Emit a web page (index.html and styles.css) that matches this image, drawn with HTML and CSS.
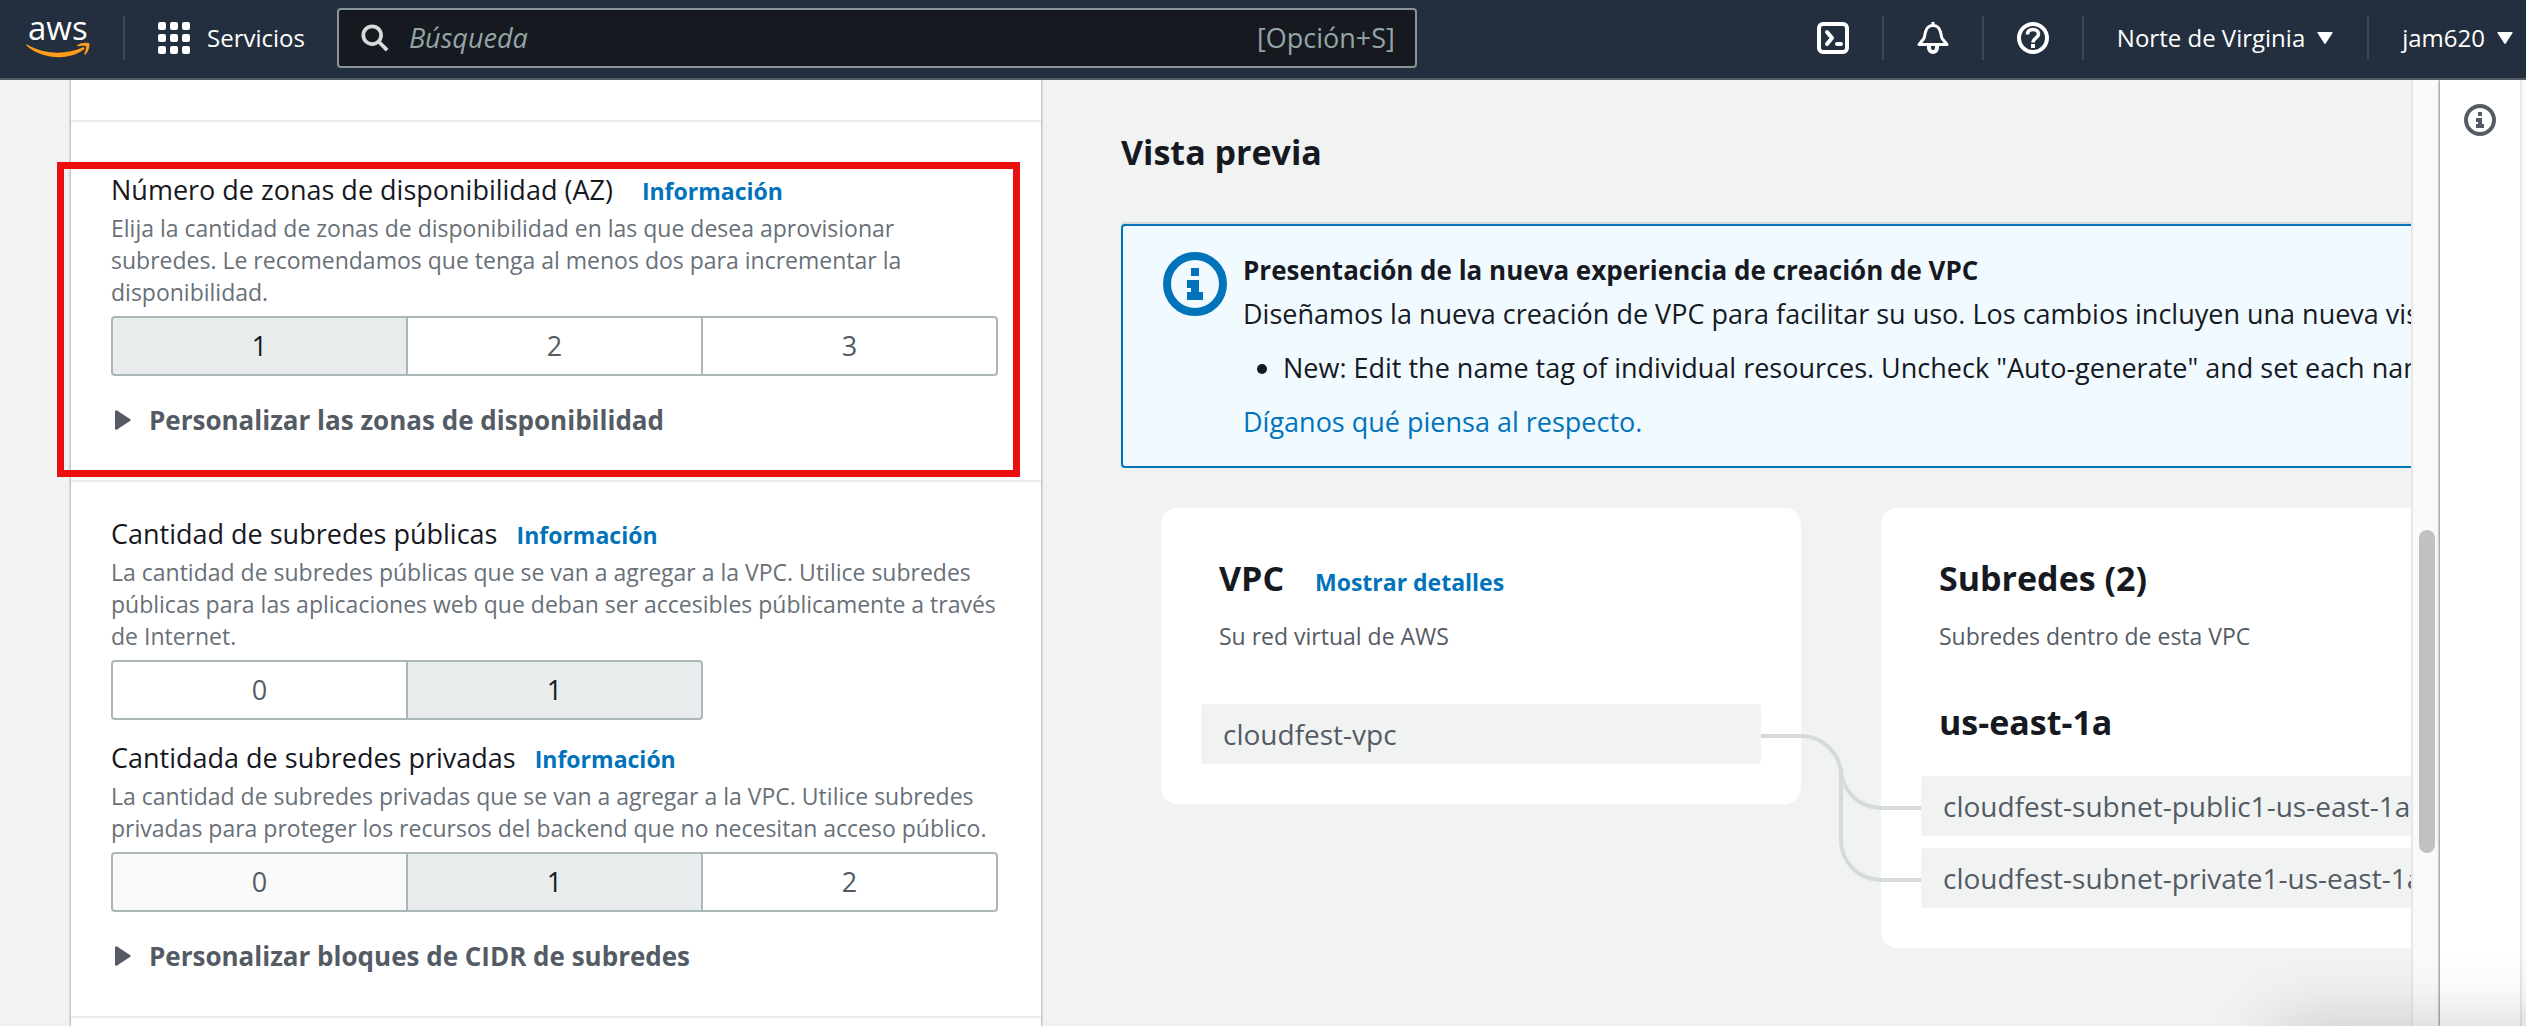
FILE: index.html
```html
<!DOCTYPE html>
<html lang="es">
<head>
<meta charset="utf-8">
<title>Crear VPC</title>
<link rel="stylesheet" href="styles.css">
</head>
<body>
<header class="topbar">
  <a class="logo" href="#" aria-label="AWS">
    <svg width="64" height="44" viewBox="0 0 64 44">
      <text class="logo-text" x="2" y="24">aws</text>
      <path fill="#ff9d1b" d="M1 28.500C18 38.500 40 39 56.500 31.500c1.800-.8 3 .8 1.400 2C43 45 16 43.500.6 29.700c-.8-.8-.2-1.500.4-1.200z"/>
      <path fill="#ff9d1b" d="M51 29.500c3-2.600 8.500-3 11.500-2.400 1.200.3 1.100 1.500.9 3-.4 3-1.500 6.200-3.800 8.300-.7.6-1.500.3-1.200-.6.9-2.500 2.200-6.100 1.600-7.300-.8-1-5.300-.6-8-.2-.9.100-1.600-.3-1-.8z"/>
    </svg>
  </a>
  <span class="rule"></span>
  <button class="services" type="button">
    <svg width="34" height="32" viewBox="0 0 34 32" fill="#fff">
      <rect x="1" width="8" height="8" rx="2"/><rect x="13" width="8" height="8" rx="2"/><rect x="25" width="8" height="8" rx="2"/>
      <rect x="1" y="12" width="8" height="8" rx="2"/><rect x="13" y="12" width="8" height="8" rx="2"/><rect x="25" y="12" width="8" height="8" rx="2"/>
      <rect x="1" y="24" width="8" height="8" rx="2"/><rect x="13" y="24" width="8" height="8" rx="2"/><rect x="25" y="24" width="8" height="8" rx="2"/>
    </svg>
    Servicios
  </button>
  <form class="search" role="search">
    <svg width="28" height="28" viewBox="0 0 30 30" fill="none" stroke="#d5dbdb" stroke-width="4">
      <circle cx="12" cy="12" r="9.500"/><path d="M18.500 18.500L28 28"/>
    </svg>
    <input type="search" placeholder="Búsqueda" aria-label="Búsqueda">
    <span class="shortcut">[Opción+S]</span>
  </form>
  <nav class="tools">
    <button class="tool" type="button" aria-label="CloudShell">
      <svg width="32" height="32" viewBox="0 0 32 32" fill="none" stroke="#fff" stroke-width="4" stroke-linejoin="round">
        <rect x="2" y="2" width="28" height="28" rx="4"/><path stroke-linecap="round" d="M10 10l5 6-5 6M20 22h4"/>
      </svg>
    </button>
    <span class="rule"></span>
    <button class="tool" type="button" aria-label="Notificaciones">
      <svg width="32" height="32" viewBox="0 0 32 32" fill="none" stroke="#fff" stroke-linejoin="round">
        <path stroke-width="3" d="M16 0v4M2 22.500h28l-4.500-5.500c-1.500-2-1-4-2-7C22.500 6 19.500 3.500 16 3.500S9.500 6 8.500 10c-1 3-.5 5-2 7z"/>
        <path stroke-width="4" d="M12 23v3a4 4 0 0 0 8 0v-3"/>
      </svg>
    </button>
    <span class="rule"></span>
    <button class="tool" type="button" aria-label="Ayuda">
      <svg width="32" height="32" viewBox="0 0 32 32" fill="none" stroke="#fff">
        <circle cx="16" cy="16" r="14" stroke-width="4"/>
        <path stroke-width="3.500" d="M10.500 12.500c0-3 2-5 5.500-5s5.500 2 5.500 4.800c0 3.200-5.500 4-5.500 8.200"/>
        <path fill="#fff" stroke="none" d="M14 22h4v4h-4z"/>
      </svg>
    </button>
    <span class="rule"></span>
    <button class="menu" type="button">Norte de Virginia
      <svg width="16" height="12" viewBox="0 0 16 12" fill="#fff"><path d="M1 0h14q1 0 .5 1L9 11q-1 2-2 0L.5 1Q0 0 1 0z"/></svg>
    </button>
    <span class="rule"></span>
    <button class="menu account" type="button">jam620
      <svg width="16" height="12" viewBox="0 0 16 12" fill="#fff"><path d="M1 0h14q1 0 .5 1L9 11q-1 2-2 0L.5 1Q0 0 1 0z"/></svg>
    </button>
  </nav>
</header>

<div class="page">
  <main class="content">
    <div class="form-pane">
      <form class="panel">
        <div class="section stub"></div>

        <section class="section zones">
          <div class="field">
            <h3 class="label">Número de zonas de disponibilidad (AZ) <a class="info wide" href="#">Información</a></h3>
            <p class="hint">Elija la cantidad de zonas de disponibilidad en las que desea aprovisionar subredes. Le recomendamos que tenga al menos dos para incrementar la disponibilidad.</p>
            <div class="segments" role="group" aria-label="Número de zonas de disponibilidad">
              <button type="button" class="on" aria-pressed="true">1</button><button type="button">2</button><button type="button">3</button>
            </div>
          </div>
          <details>
            <summary><svg width="16" height="20" viewBox="0 0 16 20" fill="#545b64"><path d="M0 1.500Q0-.5 2 .5l13 8.500q1.500 1 0 2L2 19.500q-2 1-2-1z"/></svg>Personalizar las zonas de disponibilidad</summary>
          </details>
        </section>

        <section class="section subnets">
          <div class="field">
            <h3 class="label">Cantidad de subredes públicas <a class="info" href="#">Información</a></h3>
            <p class="hint">La cantidad de subredes públicas que se van a agregar a la VPC. Utilice subredes públicas para las aplicaciones web que deban ser accesibles públicamente a través de Internet.</p>
            <div class="segments" role="group" aria-label="Cantidad de subredes públicas">
              <button type="button">0</button><button type="button" class="on" aria-pressed="true">1</button>
            </div>
          </div>
          <div class="field">
            <h3 class="label">Cantidada de subredes privadas <a class="info" href="#">Información</a></h3>
            <p class="hint">La cantidad de subredes privadas que se van a agregar a la VPC. Utilice subredes privadas para proteger los recursos del backend que no necesitan acceso público.</p>
            <div class="segments" role="group" aria-label="Cantidad de subredes privadas">
              <button type="button" class="hovered">0</button><button type="button" class="on" aria-pressed="true">1</button><button type="button">2</button>
            </div>
          </div>
          <details>
            <summary><svg width="16" height="20" viewBox="0 0 16 20" fill="#545b64"><path d="M0 1.500Q0-.5 2 .5l13 8.500q1.500 1 0 2L2 19.500q-2 1-2-1z"/></svg>Personalizar bloques de CIDR de subredes</summary>
          </details>
        </section>
      </form>
    </div>

    <div class="preview">
      <h2 class="title">Vista previa</h2>
      <div class="alert">
        <svg class="alert-icon" width="64" height="64" viewBox="0 0 64 64">
          <circle cx="32" cy="32" r="28" fill="none" stroke="#0073bb" stroke-width="8"/>
          <path fill="#0073bb" d="M28 16h8v8h-8zM24 28h12v12h4v8H24v-8h4v-4h-4z"/>
        </svg>
        <div class="alert-text">
          <h3>Presentación de la nueva experiencia de creación de VPC</h3>
          <p>Diseñamos la nueva creación de VPC para facilitar su uso. Los cambios incluyen una nueva vista</p>
          <ul><li>New: Edit the name tag of individual resources. Uncheck "Auto-generate" and set each name</li></ul>
          <a href="#">Díganos qué piensa al respecto.</a>
        </div>
      </div>

      <div class="diagram">
        <section class="card">
          <h2 class="title">VPC <a class="info wide" href="#">Mostrar detalles</a></h2>
          <p class="subtitle">Su red virtual de AWS</p>
          <div class="resource">cloudfest-vpc</div>
        </section>
        <section class="card">
          <h2 class="title">Subredes (2)</h2>
          <p class="subtitle">Subredes dentro de esta VPC</p>
          <h2 class="title zone">us-east-1a</h2>
          <div class="resource">cloudfest-subnet-public1-us-east-1a</div>
          <div class="resource">cloudfest-subnet-private1-us-east-1a</div>
        </section>
        <svg class="links" width="160" height="440" viewBox="0 0 160 440" fill="none" stroke="#d5dbdb" stroke-width="4">
          <path d="M0 228h40a40 40 0 0 1 40 40v64a40 40 0 0 0 40 40h40M80 260a40 40 0 0 0 40 40h40"/>
        </svg>
      </div>
    </div>
  </main>
  <div class="scrollbar"><div class="thumb"></div></div>
  <aside class="help">
    <button type="button" aria-label="Información">
      <svg width="32" height="32" viewBox="0 0 64 64">
        <circle cx="32" cy="32" r="28" fill="none" stroke="#545b64" stroke-width="8"/>
        <path fill="#545b64" d="M28 16h8v8h-8zM24 28h12v12h4v8H24v-8h4v-4h-4z"/>
      </svg>
    </button>
  </aside>
  <div class="edge"></div>
  <div class="corner-shadow"></div>
</div>
</body>
</html>
```
FILE: styles.css
```css
* { box-sizing: border-box; }

body {
  margin: 0;
  height: 100vh;
  display: flex;
  flex-direction: column;
  overflow: hidden;
  background: #f1f3f3;
  color: #16191f;
  font: 27px/44px "Open Sans", "Noto Sans", sans-serif;
}

h2, h3, p, ul { margin: 0; font-size: inherit; }
a { color: #0073bb; text-decoration: none; }
button { font: inherit; cursor: pointer; }
svg { display: block; flex: none; overflow: visible; }

/* Top bar */
.topbar {
  flex: none;
  display: flex;
  align-items: center;
  height: 80px;
  padding: 0 13px 2px 26px;
  background: #232f3e;
  border-bottom: 2px solid #545b64;
  font-size: 24px;
  font-weight: 500;
  line-height: 32px;
}
.topbar button {
  display: flex;
  align-items: center;
  padding: 0;
  border: 0;
  background: none;
  color: #fff;
  white-space: nowrap;
}
.logo-text { font: 500 33px/40px "Open Sans", sans-serif; fill: #fff; }
.logo { margin-right: 33px; }
.rule { flex: none; width: 2px; height: 44px; background: #414750; }
.topbar .services { gap: 16px; margin: 0 32px; }
.search {
  flex: 0 1 1080px;
  display: flex;
  align-items: center;
  gap: 20px;
  height: 60px;
  padding: 0 20px 0 22px;
  background: #16191f;
  border: 2px solid #879596;
  border-radius: 4px;
  color: #95a5a6;
  font-size: 27px;
}
.search input {
  flex: 1;
  min-width: 0;
  padding: 0;
  border: 0;
  outline: 0;
  background: none;
  color: #fff;
  font: inherit;
}
.search input::placeholder { color: #95a5a6; font-style: italic; opacity: 1; }
.tools { display: flex; align-items: center; margin-left: auto; }
.tools .tool { padding: 0 33px; }
.tools .menu { gap: 12px; padding: 0 34px 0 33px; }
.tools .account { padding-right: 0; }

/* Page frame */
.page { position: relative; flex: 1; display: flex; min-height: 0; overflow: hidden; }
.content {
  flex: 1;
  min-width: 0;
  display: grid;
  grid-template-columns: 1042fr 1369fr;
}
.form-pane { display: flex; min-width: 0; padding-left: 70px; }
.panel {
  flex: 1;
  background: #fff;
  border: solid #c1c6c8;
  border-width: 0 1px;
  box-shadow: 0 0 2px rgba(0, 28, 36, .3);
}
.section { padding: 0 40px; border-bottom: 2px solid #eaeded; }
.stub { padding-bottom: 40px; }
.zones { position: relative; padding-top: 46px; padding-bottom: 40px; }
.zones::after {
  content: "";
  position: absolute;
  inset: 40px 21px 3px -14px;
  border: 7px solid #eb0f0f;
  pointer-events: none;
}
.subnets { padding-top: 30px; padding-bottom: 40px; }

/* Form fields */
.field + .field { margin-top: 16px; }
.label { font-weight: 400; }
.info { margin-left: 12px; font-size: 23px; font-weight: 700; line-height: 24px; }
.info.wide { margin-left: 22px; }
.hint { margin-bottom: 8px; color: #687078; font-size: 23px; line-height: 32px; }
.segments { display: flex; }
.segments button {
  flex: 0 1 297px;
  height: 60px;
  padding: 0;
  background: #fff;
  border: 2px solid #aab7b8;
  color: #545b64;
}
.segments button + button { margin-left: -2px; }
.segments button:first-child { border-radius: 4px 0 0 4px; }
.segments button:last-child { border-radius: 0 4px 4px 0; }
.segments .on { background: #e8ecec; color: #16191f; }
.segments .hovered { background: #fafafa; }
summary {
  display: flex;
  align-items: center;
  gap: 18px;
  margin-top: 24px;
  padding-left: 4px;
  color: #545b64;
  font-size: 26px;
  font-weight: 700;
  line-height: 40px;
  cursor: pointer;
}

/* Preview */
.preview { min-width: 0; padding: 48px 0 0 79px; overflow: hidden; white-space: nowrap; }
.title { font-size: 34px; line-height: 48px; }
.alert {
  display: flex;
  gap: 16px;
  margin: 48px -40px 40px 0;
  padding: 22px 40px;
  background: #f1faff;
  border: 2px solid #0073bb;
  border-radius: 4px;
  box-shadow: 0 -2px #d5dbdb;
}
.alert-icon { margin-top: 4px; }
.alert-text h3 { font-size: 26px; }
.alert-text ul { margin: 10px 0; padding-left: 40px; }
.diagram {
  position: relative;
  display: flex;
  align-items: flex-start;
  gap: 80px;
  padding-left: 40px;
}
.card {
  flex: none;
  width: 640px;
  padding: 46px 40px 40px;
  background: #fff;
  border-radius: 16px;
}
.card .title, .subtitle { margin-left: 18px; }
.subtitle { margin-top: 18px; margin-bottom: 52px; color: #545b64; font-size: 23px; line-height: 32px; }
.zone { margin-top: -6px; margin-bottom: 30px; }
.resource {
  height: 60px;
  padding-left: 22px;
  background: #f1f3f3;
  border-radius: 4px;
  color: #545b64;
  font-size: 28px;
  line-height: 60px;
}
.resource + .resource { margin-top: 12px; }
.links { position: absolute; left: 640px; top: 0; }

/* Right rail */
.scrollbar {
  flex: none;
  width: 29px;
  padding: 450px 5px 0 6px;
  background: #fafafa;
  border-left: 2px solid #e7e7e7;
}
.thumb { height: 323px; border-radius: 8px; background: #c1c1c1; }
.help {
  flex: none;
  width: 80px;
  padding-top: 24px;
  background: #fff;
  box-shadow: -1px 0 2px rgba(0, 28, 36, .5);
}
.help button { display: block; margin: 0 auto; padding: 0; border: 0; background: none; }
.edge { flex: none; width: 6px; background: #fafafa; border-left: 2px solid #e7e7e7; }
.corner-shadow {
  position: absolute;
  left: 90%;
  right: -200px;
  top: 100%;
  height: 60px;
  box-shadow: 0 0 70px rgba(0, 0, 0, .2);
  pointer-events: none;
}
```
